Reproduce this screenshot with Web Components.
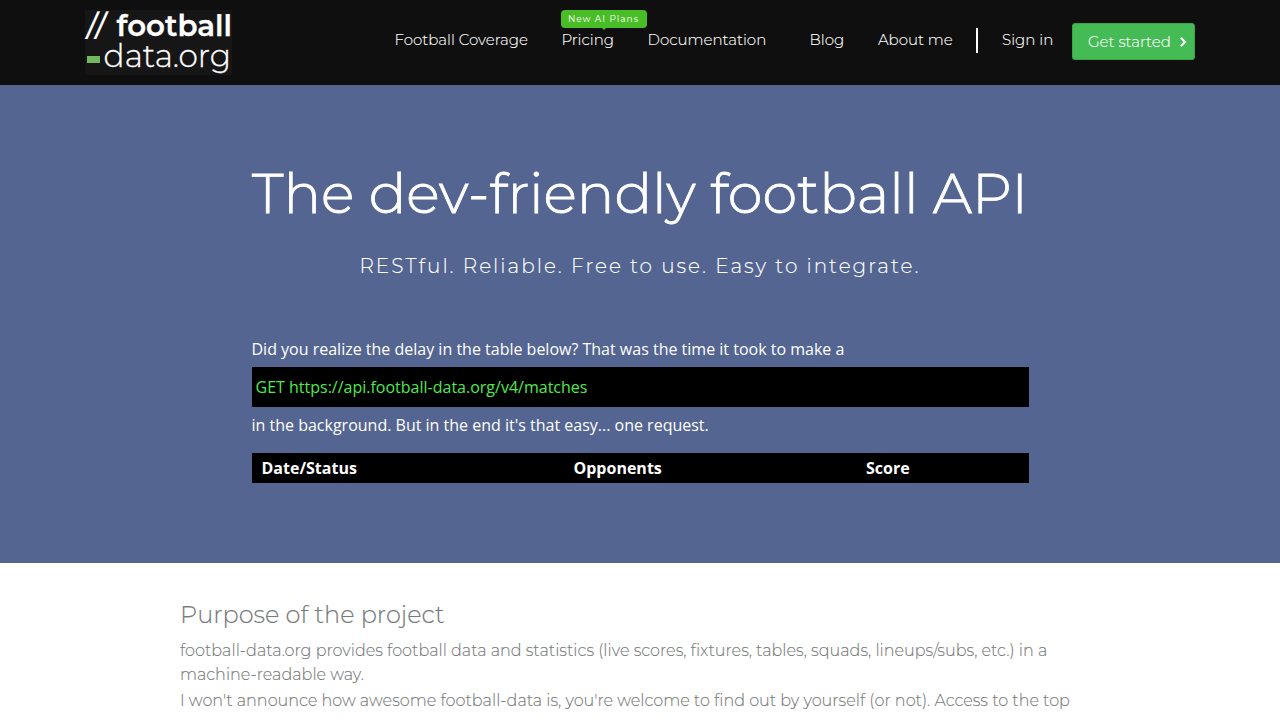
<!DOCTYPE html>
<html lang="en">
<head>
<meta charset="utf-8">
<title>football-data.org</title>
<style>
    html{
        overflow: hidden;
    }

    body{
        margin: 0;
        background-color: white;
        font-family: Montserrat, Inter, "Liberation Sans", sans-serif;
        font-weight: 300;
        /* the light weight is a bit thin without it */
        -webkit-text-stroke: .12px currentColor;
    }
</style>
</head>
<body>

<site-header>
    <site-logo slot="logo"></site-logo>
    <nav-link>Football Coverage</nav-link>
    <nav-link badge="New AI Plans">Pricing</nav-link>
    <nav-link>Documentation</nav-link>
    <nav-link>Blog</nav-link>
    <nav-link>About me</nav-link>
    <nav-link slot="account">Sign in</nav-link>
    <start-button slot="account">Get started</start-button>
</site-header>

<hero-banner>
    <span slot="title">The dev-friendly football API</span>
    <span slot="tagline">RESTful. Reliable. Free to use. Easy to integrate.</span>
    <request-demo url="https://api.football-data.org/v4/matches">
        <span slot="before">Did you realize the delay in the table below? That was the time it took to make a</span>
        <span slot="after">in the background. But in the end it's that easy... one request.</span>
    </request-demo>
    <match-table></match-table>
</hero-banner>

<text-section>
    <span slot="heading">Purpose of the project</span>
    <text-block>football-data.org provides football data and statistics (live scores, fixtures, tables, squads, lineups/subs, etc.) in a machine-readable way.</text-block>
    <text-block>I won't announce how awesome football-data is, you're welcome to find out by yourself (or not). Access to the top</text-block>
</text-section>

<script>
// small helper, all the components below get their shadow root from here
class BaseElement extends HTMLElement {
    constructor(html) {
        super();
        let template = document.createElement('template');
        template.innerHTML = html;
        const shadow = this.attachShadow({ mode: "open" });
        shadow.append(template.content.cloneNode(true));
    }
}

class SiteHeader extends BaseElement {
    constructor() {
        super(`
        <style>
        :host{
            display: flex;
            box-sizing: border-box;
            height: 85px;
            padding: 0 85px;
            background-color: #0f0f0f;
            color: white;
        }

        .logo{
            padding-top: 10px;
            width: 309px;
            flex: none;
        }

        nav{
            display: grid;
            grid-template-columns: 167px 86px 162px 68.5px 98.5px;
            align-content: start;
            padding-top: 28px;
        }

        .account{
            display: flex;
            align-items: flex-start;
        }

        .divider{
            width: 2px;
            height: 25px;
            margin: 28px 23.5px 0 0;
            background-color: white;
        }

        ::slotted(nav-link[slot="account"]){
            width: 70.5px;
            margin-top: 28px;
        }
        </style>

        <div class="logo"><slot name="logo"></slot></div>
        <nav><slot></slot></nav>
        <div class="account">
            <div class="divider"></div>
            <slot name="account"></slot>
        </div>
        `);
    }
}

class SiteLogo extends BaseElement {
    constructor() {
        super(`
        <style>
        :host{
            display: block;
            width: 147px;
            height: 65px;
            background-color: #171616;
            color: white;
            white-space: nowrap;
        }

        div{
            display: flex;
            justify-content: space-between;
            align-items: center;
            height: 31px;
            line-height: 31px;
        }

        .slashes{
            flex: none;
            padding-left: 2px;
            font-size: 29px;
            font-weight: 500;
            letter-spacing: .7px;
            transform: skewX(-6deg);
        }

        .name{
            font-size: 29.3px;
            font-weight: 600;
            -webkit-text-stroke: .3px white;
        }

        .dash{
            flex: none;
            width: 13px;
            height: 7px;
            margin: 5px 0 0 2px;
            background-color: #74b85e;
        }

        .domain{
            padding-right: 1px;
            font-size: 31.2px;
            -webkit-text-stroke: .3px white;
        }
        </style>

        <div><span class="slashes">//</span><span class="name">football</span></div>
        <div><span class="dash"></span><span class="domain">data.org</span></div>
        `);
    }
}

class NavLink extends BaseElement {
    constructor() {
        super(`
        <style>
        :host{
            display: block;
            position: relative;
            box-sizing: border-box;
            padding-left: .5px;
            font-size: 15px;
            line-height: 24px;
            white-space: nowrap;
        }

        .badge{
            position: absolute;
            left: 0;
            top: -18px;
            width: 86px;
            height: 18px;
            border-radius: 4px;
            background-color: #49bd26;
            font-size: 9px;
            font-weight: 400;
            line-height: 18px;
            letter-spacing: 1px;
            text-align: center;
            text-indent: -1px;
            -webkit-text-stroke: 0;
        }

        /* little arrow pointing at the link */
        .badge::after{
            content: "";
            position: absolute;
            left: 41px;
            top: 18px;
            border: 2px solid transparent;
            border-top-color: #49bd26;
            border-bottom: none;
        }
        </style>

        <slot></slot>
        `);
        if (this.hasAttribute('badge')) {
            let badge = document.createElement('div');
            badge.className = 'badge';
            badge.textContent = this.getAttribute('badge');
            this.shadowRoot.append(badge);
        }
    }
}

class StartButton extends BaseElement {
    constructor() {
        super(`
        <style>
        :host{
            display: block;
            margin-top: 23px;
        }

        button{
            display: flex;
            align-items: center;
            justify-content: space-between;
            box-sizing: border-box;
            width: 123px;
            height: 37px;
            padding: 0 7px 0 15px;
            border: 1px solid #3aa548;
            border-radius: 3px;
            background-color: #45bb55;
            color: white;
            font: inherit;
            font-size: 15px;
            white-space: nowrap;
        }

        svg{
            display: block;
        }
        </style>

        <button>
            <slot></slot>
            <svg width="8" height="10" viewBox="0 0 8 10" fill="none" stroke="white" stroke-width="2">
                <path d="M1.8 .8 L6 5 L1.8 9.2"/>
            </svg>
        </button>
        `);
    }
}

class HeroBanner extends BaseElement {
    constructor() {
        super(`
        <style>
        :host{
            display: flex;
            flex-direction: column;
            align-items: center;
            box-sizing: border-box;
            height: 478px;
            padding-top: 78px;
            background-color: #536590;
            color: white;
        }

        h1, h2{
            margin: 0;
            font-weight: 300;
            white-space: nowrap;
        }

        h1{
            font-size: 55.8px;
            line-height: 60px;
            -webkit-text-stroke: .8px white;
        }

        h2{
            margin-top: 28px;
            font-size: 20px;
            line-height: 30px;
            letter-spacing: 2px;
        }

        .content{
            width: 777px;
            margin-top: 56px;
            -webkit-text-stroke: 0;
        }
        </style>

        <h1><slot name="title"></slot></h1>
        <h2><slot name="tagline"></slot></h2>
        <div class="content"><slot></slot></div>
        `);
    }
}

class RequestDemo extends BaseElement {
    constructor() {
        super(`
        <style>
        :host{
            display: block;
            font-family: "Open Sans", sans-serif;
            font-size: 16px;
            font-weight: 400;
            line-height: 24px;
        }

        .request{
            margin: 6px 0;
            padding-left: 4px;
            background-color: black;
            color: #4fe84f;
            line-height: 40px;
        }
        </style>

        <div><slot name="before"></slot></div>
        <div class="request"></div>
        <div><slot name="after"></slot></div>
        `);
        this.shadowRoot.querySelector('.request').textContent = 'GET ' + this.getAttribute('url');
    }
}

class MatchTable extends BaseElement {
    constructor() {
        super(`
        <style>
        :host{
            display: block;
            margin-top: 16px;
            font-family: "Open Sans", sans-serif;
            font-size: 16px;
        }

        .head{
            display: grid;
            grid-template-columns: 312px 292.5px 1fr;
            padding-left: 10px;
            background-color: black;
            font-weight: 700;
            line-height: 30px;
        }
        </style>

        <div class="head">
            <div>Date/Status</div>
            <div>Opponents</div>
            <div>Score</div>
        </div>
        `);
    }
}

class TextSection extends BaseElement {
    constructor() {
        super(`
        <style>
        :host{
            display: block;
            padding: 34px 180px 0;
            color: #777a7a;
        }

        h3{
            margin: 0 0 6px;
            font-size: 24px;
            font-weight: 300;
            line-height: 36px;
        }
        </style>

        <h3><slot name="heading"></slot></h3>
        <slot></slot>
        `);
    }
}

class TextBlock extends BaseElement {
    constructor() {
        super(`
        <style>
        :host{
            display: block;
            margin-bottom: 2px;
            font-size: 16px;
            line-height: 24px;
            letter-spacing: .01px;
            font-variant-ligatures: common-ligatures;
        }
        </style>

        <slot></slot>
        `);
    }
}

customElements.define('site-header', SiteHeader)
customElements.define('site-logo', SiteLogo)
customElements.define('nav-link', NavLink)
customElements.define('start-button', StartButton)
customElements.define('hero-banner', HeroBanner)
customElements.define('request-demo', RequestDemo)
customElements.define('match-table', MatchTable)
customElements.define('text-section', TextSection)
customElements.define('text-block', TextBlock)
</script>
</body>
</html>
